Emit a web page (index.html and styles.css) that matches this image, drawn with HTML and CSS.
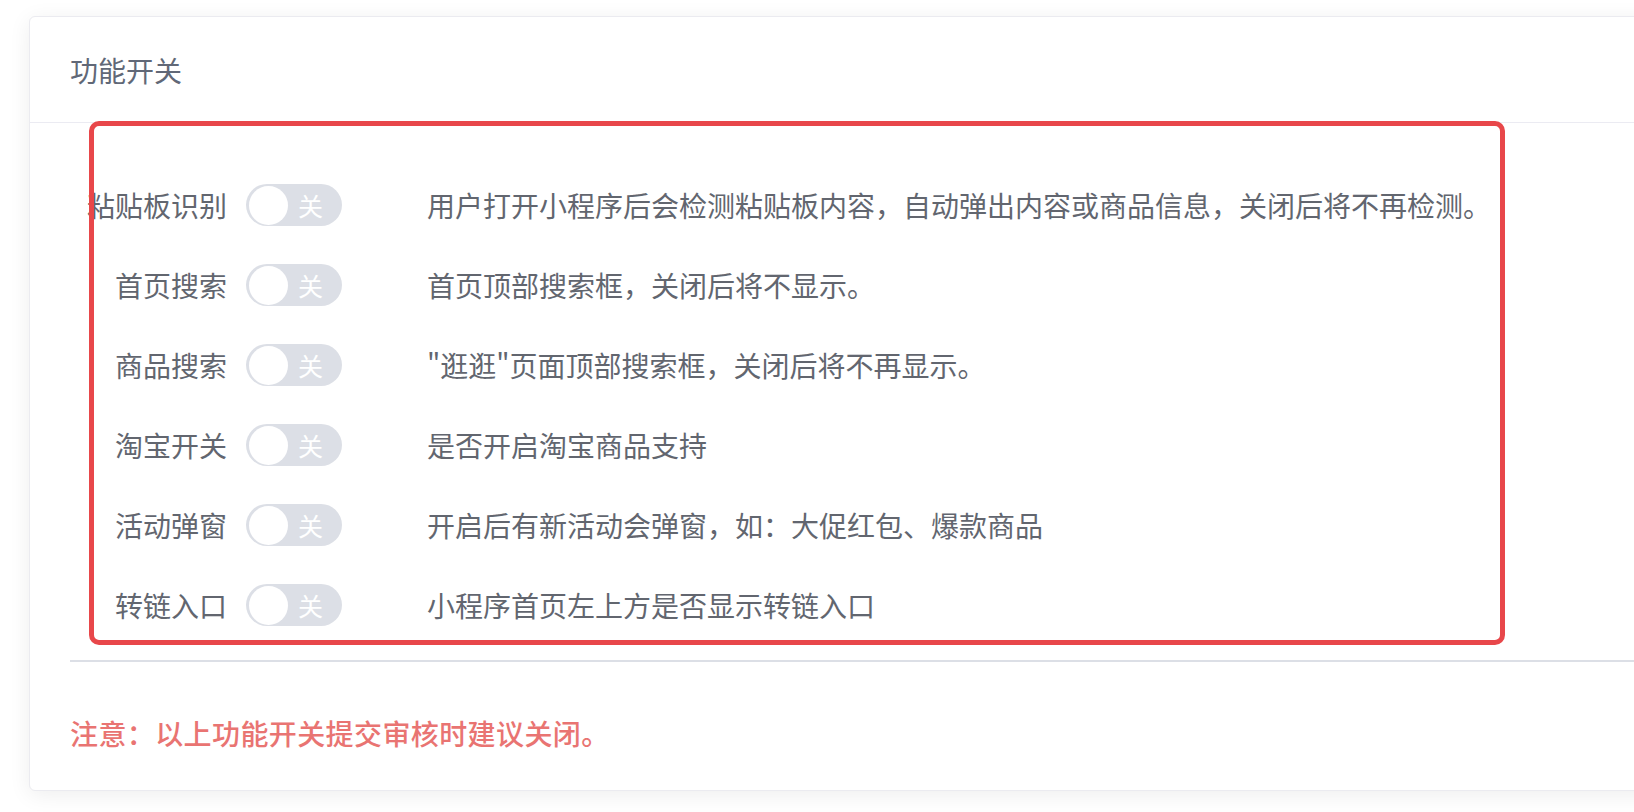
FILE: index.html
```html
<!DOCTYPE html>
<html lang="zh-CN">
<head>
<meta charset="utf-8">
<title>功能开关</title>
<link rel="stylesheet" href="styles.css">
</head>
<body>
<div class="page">
  <div class="card">
    <div class="card-header">功能开关</div>
    <div class="card-body">
      <div class="rows">
        <div class="row">
          <div class="label">粘贴板识别</div>
          <div class="switch"><span class="knob"></span><span class="switch-text">关</span></div>
          <div class="desc">用户打开小程序后会检测粘贴板内容，自动弹出内容或商品信息，关闭后将不再检测。</div>
        </div>
        <div class="row">
          <div class="label">首页搜索</div>
          <div class="switch"><span class="knob"></span><span class="switch-text">关</span></div>
          <div class="desc">首页顶部搜索框，关闭后将不显示。</div>
        </div>
        <div class="row">
          <div class="label">商品搜索</div>
          <div class="switch"><span class="knob"></span><span class="switch-text">关</span></div>
          <div class="desc">"逛逛"页面顶部搜索框，关闭后将不再显示。</div>
        </div>
        <div class="row">
          <div class="label">淘宝开关</div>
          <div class="switch"><span class="knob"></span><span class="switch-text">关</span></div>
          <div class="desc">是否开启淘宝商品支持</div>
        </div>
        <div class="row">
          <div class="label">活动弹窗</div>
          <div class="switch"><span class="knob"></span><span class="switch-text">关</span></div>
          <div class="desc">开启后有新活动会弹窗，如：大促红包、爆款商品</div>
        </div>
        <div class="row">
          <div class="label">转链入口</div>
          <div class="switch"><span class="knob"></span><span class="switch-text">关</span></div>
          <div class="desc">小程序首页左上方是否显示转链入口</div>
        </div>
      </div>
      <div class="divider"></div>
      <div class="note">注意：以上功能开关提交审核时建议关闭。</div>
      <div class="highlight"></div>
    </div>
  </div>
</div>
</body>
</html>
```

FILE: styles.css
```css
html, body {
  margin: 0;
  padding: 0;
  background: #ffffff;
}

body {
  font-family: "Noto Sans CJK SC", "Noto Sans", sans-serif;
  color: #62666f;
  overflow: hidden;
}

.page {
  height: 812px;
  padding: 16px 0 0 29px;
  box-sizing: border-box;
  overflow: hidden;
}

.card {
  width: 1700px;
  background: #fff;
  border: 1px solid #ebebf0;
  border-radius: 6px;
  box-shadow: 0 4px 22px rgba(0, 0, 0, 0.07);
}

.card-header {
  height: 105px;
  display: flex;
  align-items: center;
  padding-left: 40px;
  font-size: 28px;
  color: #616877;
  border-bottom: 1px solid #ebebf2;
}

.card-body {
  position: relative;
  padding: 61px 0 37px 40px;
}

.rows {
  display: flex;
  flex-direction: column;
  gap: 38px;
}

.row {
  display: flex;
  align-items: center;
  height: 42px;
  font-size: 28px;
  line-height: 40px;
}

.label {
  width: 157px;
  text-align: right;
  white-space: nowrap;
  color: #62666f;
  flex-shrink: 0;
}

.switch {
  margin-left: 19px;
  width: 96px;
  height: 42px;
  border-radius: 21px;
  background: #dcdfe6;
  display: flex;
  align-items: center;
  flex-shrink: 0;
  box-sizing: border-box;
  padding-left: 3px;
}

.knob {
  width: 39px;
  height: 39px;
  border-radius: 50%;
  background: #fff;
  flex-shrink: 0;
}

.switch-text {
  margin-left: 10px;
  font-size: 25px;
  line-height: 1;
  color: #fff;
}

.desc {
  margin-left: 85px;
  white-space: nowrap;
  color: #62666f;
}

.divider {
  margin-top: 34px;
  height: 2px;
  background: #dcdfe6;
}

.note {
  margin-top: 51px;
  font-size: 28px;
  line-height: 40px;
  font-weight: 500;
  letter-spacing: 0.4px;
  color: #e97472;
}

.highlight {
  position: absolute;
  left: 59px;
  top: -2px;
  width: 1416px;
  height: 524px;
  box-sizing: border-box;
  border: 5px solid #e8474a;
  border-radius: 10px;
  pointer-events: none;
}
```
